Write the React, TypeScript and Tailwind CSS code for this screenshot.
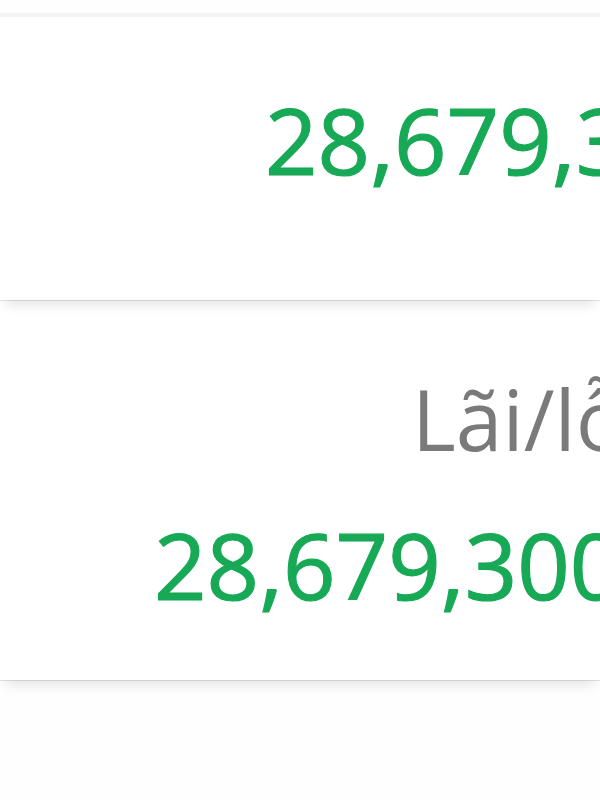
import React from 'react';

const green = 'text-[#17a956] [-webkit-text-stroke:1.2px_#17a956]';

const App: React.FC = () => {
  return (
    <div className="w-[600px] h-[800px] bg-[#fefefe] overflow-hidden font-['Open_Sans','Noto_Sans',sans-serif]">
      {/* edge of the card above */}
      <div className="h-[13px]" />
      <div className="h-[4px] bg-[#f4f4f4]" />

      {/* Card: total */}
      <div className="relative z-10 h-[283px] bg-white shadow-[0_1px_0_rgba(0,0,0,0.1),0_10px_12px_-6px_rgba(0,0,0,0.12)] pt-[77px] pl-[265px]">
        <div className={`text-[92px] leading-none whitespace-nowrap ${green}`}>28,679,300</div>
      </div>

      {/* Card: profit / loss */}
      <div className="relative h-[380px] bg-white shadow-[0_1px_0_rgba(0,0,0,0.1),0_10px_12px_-6px_rgba(0,0,0,0.12)] pt-[77px]">
        <div className="pl-[412px] text-[84px] leading-none whitespace-nowrap text-[#7a7a7a]">Lãi/lỗ</div>
        <div className={`mt-[58px] pl-[154px] text-[92px] leading-none whitespace-nowrap ${green}`}>28,679,300</div>
      </div>
    </div>
  );
};

export default App;
